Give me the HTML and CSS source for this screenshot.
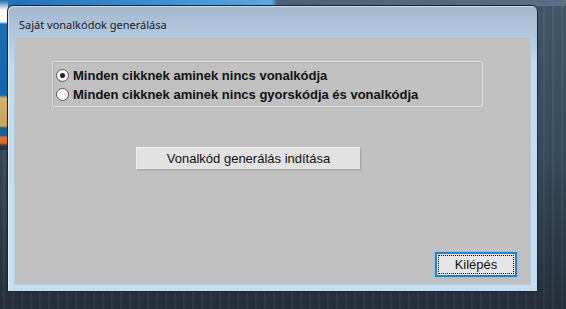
FILE: index.html
```html
<!DOCTYPE html>
<html lang="hu">
<head>
<meta charset="utf-8">
<title>Saját vonalkódok generálása</title>
<link rel="stylesheet" href="styles.css">
</head>
<body>
<div class="desktop">
  <div class="deco-top"></div>
  <div class="deco-left"></div>
  <div class="window">
    <div class="titlebar">Saját vonalkódok generálása</div>
    <div class="client">
      <div class="group">
        <label class="radio-row"><span class="radio checked"></span><span>Minden cikknek aminek nincs vonalkódja</span></label>
        <label class="radio-row"><span class="radio"></span><span>Minden cikknek aminek nincs gyorskódja és vonalkódja</span></label>
      </div>
      <div class="btn btn-generate">Vonalkód generálás indítása</div>
      <div class="footer">
        <div class="btn btn-exit"><span class="focus">Kilépés</span></div>
      </div>
    </div>
  </div>
</div>
</body>
</html>
```
FILE: styles.css
```css
html, body {
  margin: 0;
  padding: 0;
}
body {
  width: 566px;
  height: 309px;
  overflow: hidden;
  font-family: "Liberation Sans", Arial, sans-serif;
}
.desktop {
  position: relative;
  width: 566px;
  height: 309px;
  background:
    repeating-linear-gradient(90deg, rgba(0,0,0,0.08) 0 3px, rgba(255,255,255,0.03) 3px 5px, rgba(0,0,0,0.05) 5px 9px),
    linear-gradient(180deg, #475c6f 0%, #3a4e60 50%, #26313d 100%);
}
.deco-top {
  position: absolute;
  left: 0;
  top: 0;
  width: 566px;
  height: 6px;
  background: linear-gradient(90deg, #1c70b8 0%, #3c92d4 30%, #5aa8e0 48%, #4a6074 49%, #50647a 60%, #5a6e84 100%);
}
.deco-left {
  position: absolute;
  left: 0;
  top: 0;
  width: 8px;
  height: 150px;
  background: linear-gradient(180deg, #1a6cb4 0px, #ffffff 10px, #f4f8fc 22px, #1d6bb2 24px, #1565ac 95px, #d4b070 98px, #c8a060 126px, #1f5a90 128px, #2060a0 136px, #e07830 137px, #d06a28 143px, #2a3440 146px);
}
.window {
  position: absolute;
  left: 7px;
  top: 5px;
  width: 531px;
  height: 287px;
  border: 1px solid #1a2430;
  border-radius: 6px 6px 0 0;
  background: linear-gradient(180deg, #a4b8ce 0px, #b0c8de 30px, #c2dcee 60px, #c6dff0 100%);
  display: flex;
  flex-direction: column;
  padding: 0 7px 7px 7px;
  box-sizing: border-box;
  box-shadow: inset 1px 1px 0 rgba(255,255,255,0.5);
}
.titlebar {
  height: 31px;
  flex: none;
  box-sizing: border-box;
  padding: 11px 0 0 4px;
  font-family: "Noto Sans", "Open Sans", sans-serif;
  font-size: 11px;
  line-height: 15px;
  color: #1a1a1a;
}
.client {
  flex: 1;
  background: #c0c0c0;
  display: flex;
  flex-direction: column;
  align-items: flex-start;
  box-shadow: 0 0 0 1px #b4ccde;
}
.group {
  margin: 24px 0 0 37px;
  width: 431px;
  height: 46px;
  box-sizing: border-box;
  border: 1px solid #dedede;
  border-radius: 2px;
  box-shadow: inset 1px 1px 0 #b0b0b0;
  padding: 4px 0 0 3px;
  display: flex;
  flex-direction: column;
}
.radio-row {
  display: flex;
  align-items: center;
  height: 19px;
  font-weight: bold;
  font-size: 13px;
  color: #111;
  gap: 4px;
}
.radio {
  width: 13px;
  height: 13px;
  box-sizing: border-box;
  border-radius: 50%;
  border: 1px solid #5a5a5a;
  background: radial-gradient(circle at 40% 35%, #ffffff 0%, #f4f4f4 60%, #d8d8d8 100%);
  position: relative;
  flex: none;
}
.radio.checked::after {
  content: "";
  position: absolute;
  left: 3px;
  top: 3px;
  width: 5px;
  height: 5px;
  border-radius: 50%;
  background: #202020;
}
.btn {
  box-sizing: border-box;
  display: flex;
  align-items: center;
  justify-content: center;
  font-size: 13px;
  color: #111;
}
.btn-generate {
  margin: 40px 0 0 121px;
  width: 225px;
  height: 23px;
  background: #e2e2e2;
  border: 1px solid #a8a8a8;
  border-top-color: #ededed;
  border-left-color: #ededed;
  box-shadow: 1px 1px 0 #b4b4b4;
}
.footer {
  margin-top: auto;
  align-self: stretch;
  display: flex;
  justify-content: flex-end;
  padding: 0 13px 7px 0;
}
.btn-exit {
  width: 82px;
  height: 25px;
  background: #e6e6e6;
  border: 2px solid #2f7fbf;
  box-shadow: 0 0 0 1px #9cc4e4;
  padding: 1px;
}
.focus {
  flex: 1;
  align-self: stretch;
  display: flex;
  align-items: center;
  justify-content: center;
  border: 1px dotted #111;
}
```
